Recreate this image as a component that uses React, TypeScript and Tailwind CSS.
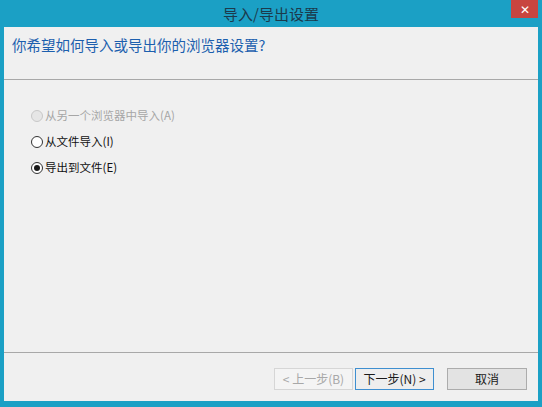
import React, { useState } from 'react';

const FONT = '"Noto Sans CJK SC", "Noto Sans", sans-serif';

type Option = { id: string; label: string; disabled?: boolean };

const options: Option[] = [
    { id: 'browser', label: '从另一个浏览器中导入(A)', disabled: true },
    { id: 'file', label: '从文件导入(I)' },
    { id: 'export', label: '导出到文件(E)' },
];

const Radio: React.FC<{ checked: boolean; disabled?: boolean }> = ({ checked, disabled }) => (
    <span
        className={`flex items-center justify-center w-[12px] h-[12px] rounded-full border shrink-0
            ${disabled ? 'border-[#c8c8c8] bg-[#e6e6e6]' : 'border-[#333] bg-white'}`}
    >
        {checked && <span className="w-[6px] h-[6px] rounded-full bg-[#1a1a1a]" />}
    </span>
);

export default function App() {
    const [choice, setChoice] = useState('export');

    return (
        <div className="w-[542px] h-[407px] bg-[#1ba0c5] flex flex-col" style={{ fontFamily: FONT }}>
            {/* title bar */}
            <div className="relative h-[27px] flex items-center justify-center shrink-0">
                <span className="text-[15px] text-[#1c3a4c] leading-none">导入/导出设置</span>
                <button className="absolute top-0 right-[4px] w-[27px] h-[18px] bg-[#c8453f] text-white text-[12px] leading-none flex items-center justify-center">
                    ✕
                </button>
            </div>

            <div className="flex-1 mx-[4px] mb-[6px] bg-[#f0f0f0] flex flex-col">
                {/* header */}
                <div className="h-[53px] pl-[8px] pt-[8px] border-b border-[#a8a8a8] shrink-0">
                    <h1 className="text-[14.5px] leading-[20px] text-[#1c5fae]">你希望如何导入或导出你的浏览器设置?</h1>
                </div>

                {/* choices */}
                <div className="flex-1 flex flex-col gap-[6px] pt-[26px] pl-[27px]">
                    {options.map((o) => (
                        <label
                            key={o.id}
                            onClick={() => !o.disabled && setChoice(o.id)}
                            className="flex items-center gap-[2px] h-[20px] cursor-default"
                        >
                            <Radio checked={choice === o.id} disabled={o.disabled} />
                            <span className={`text-[11.5px] ${o.disabled ? 'text-[#a6a6a6]' : 'text-[#111]'}`}>{o.label}</span>
                        </label>
                    ))}
                </div>

                {/* footer buttons */}
                <div className="h-[49px] border-t border-[#a8a8a8] flex items-start justify-end pt-[15px] pr-[11px] shrink-0">
                    <button
                        disabled
                        className="w-[79px] h-[22px] border border-[#d6d6d6] bg-[#f4f4f4] text-[12px] text-[#a8a8a8] flex items-center justify-center"
                    >
                        &lt; 上一步(B)
                    </button>
                    <button className="ml-[2px] w-[79px] h-[22px] border border-[#3f8fd0] bg-[#eeeeee] text-[12px] text-[#1a1a1a] flex items-center justify-center">
                        下一步(N) &gt;
                    </button>
                    <button className="ml-[13px] w-[80px] h-[22px] border border-[#acacac] bg-[#e3e3e3] text-[12px] text-[#1a1a1a] flex items-center justify-center">
                        取消
                    </button>
                </div>
            </div>
        </div>
    );
}
